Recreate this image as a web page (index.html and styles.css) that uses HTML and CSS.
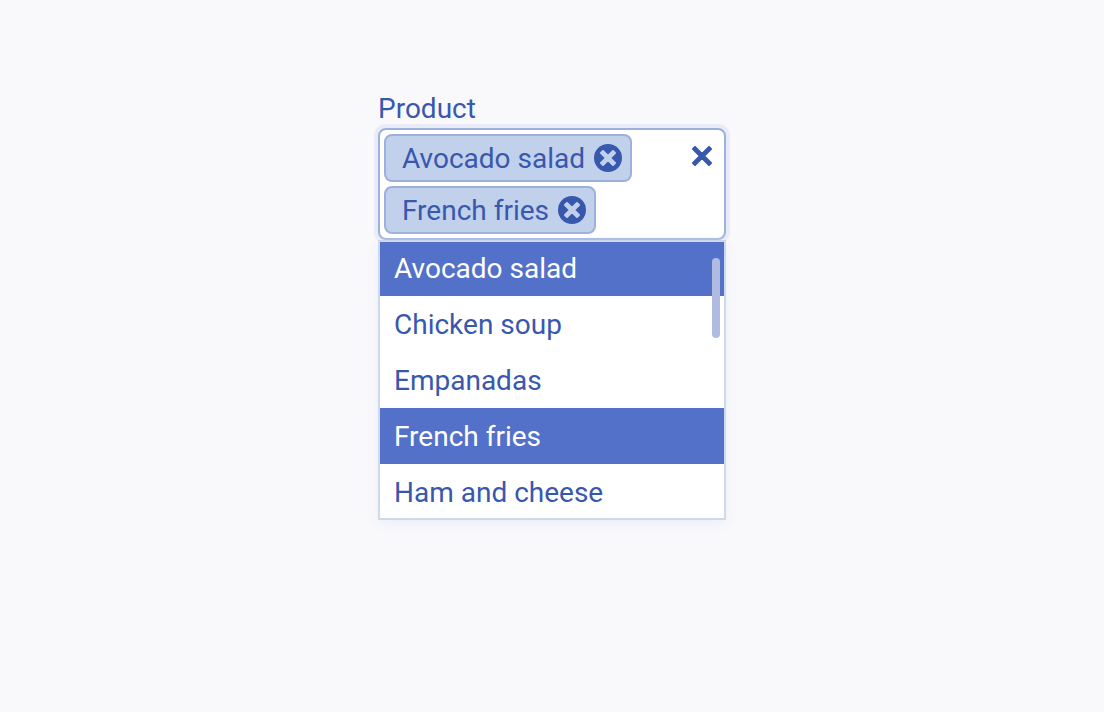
FILE: index.html
```html
<!doctype html>
<html lang="en">
  <head>
    <meta charset="utf-8">
    <meta name="viewport" content="width=device-width, initial-scale=1">
    <title>Product</title>
    <link rel="stylesheet" href="styles.css">
  </head>
  <body>
    <div class="container">
        <form class="multiselect">
            <label class="multiselect-label" for="product">Product</label>
            <div class="multiselect-control">
                <div class="tags">
                    <div class="tag">
                        <span class="tag-text">Avocado salad</span>
                        <button type="button" class="tag-remove" aria-label="Remove Avocado salad">
                            <svg viewBox="0 0 28 28">
                                <circle cx="14" cy="14" r="14"/>
                                <path d="M9 7l5 5 5-5 2 2-5 5 5 5-2 2-5-5-5 5-2-2 5-5-5-5z"/>
                            </svg>
                        </button>
                    </div>
                    <div class="tag">
                        <span class="tag-text">French fries</span>
                        <button type="button" class="tag-remove" aria-label="Remove French fries">
                            <svg viewBox="0 0 28 28">
                                <circle cx="14" cy="14" r="14"/>
                                <path d="M9 7l5 5 5-5 2 2-5 5 5 5-2 2-5-5-5 5-2-2 5-5-5-5z"/>
                            </svg>
                        </button>
                    </div>
                </div>
                <button type="button" class="clear" aria-label="Clear all">
                    <svg viewBox="0 0 20 20">
                        <path d="M3 1l7 7 7-7 2 2-7 7 7 7-2 2-7-7-7 7-2-2 7-7-7-7z"/>
                    </svg>
                </button>
            </div>
            <div class="dropdown">
                <select class="options" id="product" name="product" size="5" multiple>
                    <option selected>Avocado salad</option>
                    <option>Chicken soup</option>
                    <option>Empanadas</option>
                    <option selected>French fries</option>
                    <option>Ham and cheese</option>
                </select>
            </div>
        </form>
    </div>
  </body>
</html>
```

FILE: styles.css
```css
*{
    box-sizing: border-box;
}
body{
    margin:0;
    background-color: #f9f9fc;
    color:#3858ad;
    font-family: Roboto,Arial,sans-serif;
    font-size:28px;
    line-height:32px;
}
.container{
    display:flex;
    justify-content: center;
    padding:93px 16px;
}
.multiselect{
    width:100%;
    max-width:348px;
}
.multiselect-label{
    display:block;
    margin-bottom:3px;
}
.multiselect-control{
    display:flex;
    justify-content: space-between;
    align-items: flex-start;
    padding:4px;
    border:2px solid #9dafdb;
    border-radius:8px;
    background-color: white;
    box-shadow: 0 0 0 4px #e9ecf8;
}
.tags{
    display:flex;
    flex-direction: column;
    align-items: flex-start;
    gap:4px;
}
.tag{
    display:flex;
    align-items: center;
    gap:9px;
    height:48px;
    padding:0 8px 0 16px;
    border:2px solid #9dafdb;
    border-radius:8px;
    background-color: #c1d0eb;
}
.tag-text{
    padding-top:2px;
}
button{
    padding:0;
    border:none;
    background:none;
    cursor: pointer;
}
svg{
    display:block;
    width:100%;
    stroke-width:2;
    stroke-linejoin:round;
}
.tag-remove{
    width:28px;
    height:28px;
}
.tag-remove circle{
    fill:#3858ad;
}
.tag-remove path{
    fill:#c1d0eb;
    stroke:#c1d0eb;
}
.clear{
    width:20px;
    margin:12px 8px;
}
.clear path{
    fill:#3858ad;
    stroke:#3858ad;
}
.dropdown{
    position: relative;
    background-color: white;
    box-shadow: 0 4px 12px #eceef8;
}
/* frame drawn over the rows */
.dropdown::after{
    content:'';
    position: absolute;
    inset:0;
    border:2px solid #ced8eb;
    pointer-events: none;
}
/* scroll thumb */
.dropdown::before{
    content:'';
    position: absolute;
    z-index:1;
    top:18px;
    right:6px;
    width:8px;
    height:80px;
    border-radius:4px;
    background-color: #afbbe0;
}
.options{
    display:block;
    width:100%;
    height:280px;
    padding:0;
    border:none;
    outline:none;
    background:none;
    color:inherit;
    font:inherit;
    scrollbar-width:none;
}
.options option{
    height:56px;
    padding:12px 16px;
    line-height:32px;
}
.options option:checked{
    background:linear-gradient(#5371c8,#5371c8);
    -webkit-text-fill-color:white;
}
```
